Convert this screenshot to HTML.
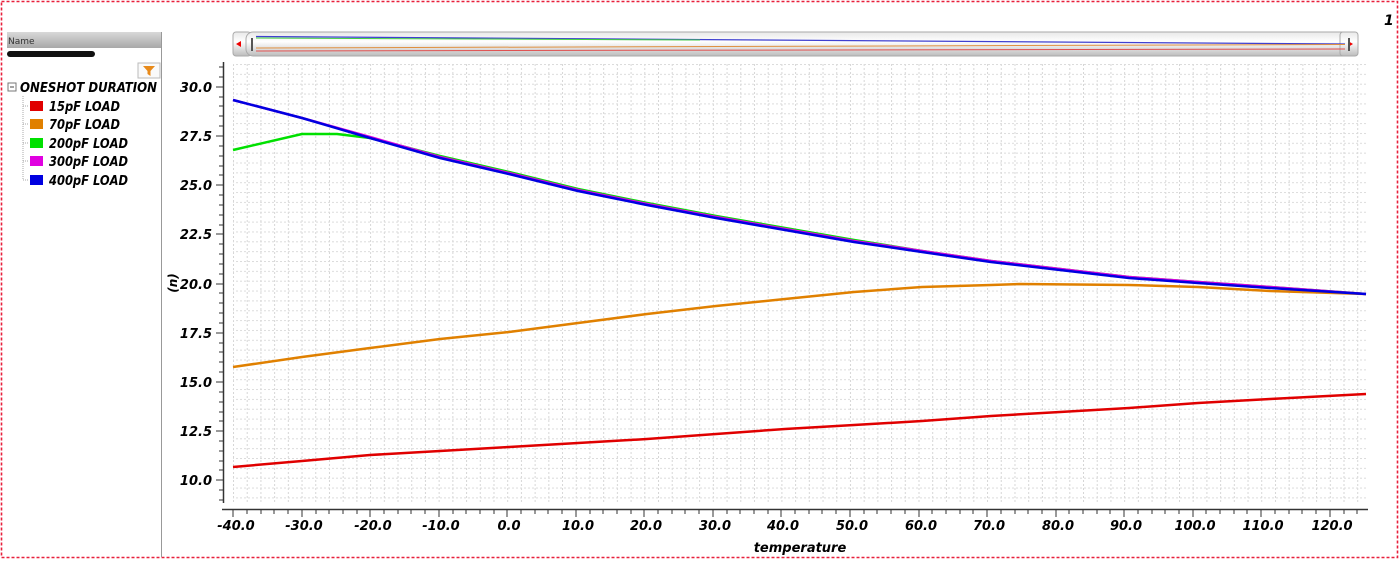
<!DOCTYPE html>
<html><head><meta charset="utf-8"><style>
body{margin:0;width:1400px;height:561px;background:#fff;overflow:hidden;font-family:"DejaVu Sans","Liberation Sans",sans-serif;}
</style></head><body>
<svg width="1400" height="561" xmlns="http://www.w3.org/2000/svg" font-family="DejaVu Sans, Liberation Sans, sans-serif">
<defs>
<pattern id="gv" x="233" y="0" width="13.71" height="4" patternUnits="userSpaceOnUse"><rect x="0" y="0" width="1" height="2" fill="#d6d6d6"/></pattern>
<pattern id="gh" x="0" y="64" width="4" height="9.85" patternUnits="userSpaceOnUse"><rect x="0" y="0" width="2" height="1" fill="#dcdcdc"/></pattern>
<linearGradient id="hd" x1="0" y1="0" x2="0" y2="1"><stop offset="0" stop-color="#d8d8d8"/><stop offset="1" stop-color="#a8a8a8"/></linearGradient>
<linearGradient id="sb" x1="0" y1="0" x2="0" y2="1"><stop offset="0" stop-color="#e8e8e8"/><stop offset="0.4" stop-color="#ffffff"/><stop offset="1" stop-color="#bcbcbc"/></linearGradient>
</defs>
<rect x="1.5" y="1.5" width="1396" height="556" fill="none" stroke="#e8203c" stroke-width="1.6" stroke-dasharray="3,2"/>
<text x="1384" y="25" font-size="14" font-weight="bold" font-style="italic">1</text>
<!-- left panel -->
<rect x="7" y="32" width="154" height="16" fill="url(#hd)"/>
<text x="8" y="44" font-size="9" fill="#333">Name</text>
<line x1="161.5" y1="32" x2="161.5" y2="557" stroke="#999"/>
<rect x="7" y="51" width="88" height="6" rx="3" fill="#111"/>
<rect x="138" y="63" width="22" height="15" fill="#fafafa" stroke="#bbb"/>
<path d="M143 66 H155 L150.5 71 V76 L147.5 74 V71 Z" fill="#e88a1a"/>
<rect x="8" y="83" width="8" height="8" fill="#fff" stroke="#777"/><line x1="10" y1="87" x2="14" y2="87" stroke="#444"/>
<text x="20" y="92" font-size="13" font-weight="bold" font-style="italic" textLength="137" lengthAdjust="spacingAndGlyphs">ONESHOT DURATION</text>
<path d="M23 96 V180 M23 106 H28 M23 124 H28 M23 143 H28 M23 161 H28 M23 180 H28" stroke="#aaa" stroke-dasharray="1,1" fill="none"/>
<g font-size="13" font-weight="bold" font-style="italic">
<rect x="30" y="101" width="13" height="10" fill="#e00000"/><text x="49" y="111" textLength="71" lengthAdjust="spacingAndGlyphs">15pF LOAD</text>
<rect x="30" y="119" width="13" height="10" fill="#e08000"/><text x="49" y="129" textLength="71" lengthAdjust="spacingAndGlyphs">70pF LOAD</text>
<rect x="30" y="138" width="13" height="10" fill="#00e000"/><text x="49" y="148" textLength="79" lengthAdjust="spacingAndGlyphs">200pF LOAD</text>
<rect x="30" y="156" width="13" height="10" fill="#e000e0"/><text x="49" y="166" textLength="79" lengthAdjust="spacingAndGlyphs">300pF LOAD</text>
<rect x="30" y="175" width="13" height="10" fill="#0000e0"/><text x="49" y="185" textLength="79" lengthAdjust="spacingAndGlyphs">400pF LOAD</text>
</g>
<!-- scrollbar -->
<rect x="233" y="32" width="18" height="24" rx="3" fill="url(#sb)" stroke="#aaa"/>
<path d="M236 44 L241 41 V47 Z" fill="#e00"/>
<rect x="246" y="32" width="1110" height="24" rx="7" fill="url(#sb)" stroke="#aaa"/>
<rect x="1340" y="32" width="18" height="24" rx="3" fill="url(#sb)" stroke="#aaa"/>
<path d="M1353 44 L1348 41 V47 Z" fill="#e00"/>
<rect x="251" y="38" width="2" height="13" fill="#555"/><rect x="1348" y="38" width="2" height="13" fill="#555"/>
<line x1="256" y1="36.5" x2="1345" y2="44" stroke="#4040d0" stroke-width="1.2"/>
<line x1="256" y1="38" x2="700" y2="40" stroke="#40d040" stroke-width="1"/>
<line x1="256" y1="48" x2="1345" y2="44.5" stroke="#e09040" stroke-width="1"/>
<line x1="256" y1="51" x2="1345" y2="49" stroke="#e05050" stroke-width="1"/>
<!-- grid -->
<rect x="233" y="64" width="1135" height="440" fill="url(#gv)"/>
<rect x="233" y="64" width="1135" height="440" fill="url(#gh)"/>
<!-- axes -->
<line x1="223.5" y1="62" x2="223.5" y2="503" stroke="#333" stroke-width="1.5"/>
<g stroke="#333">
<path d="M219 67H223M219 77H223M216 87H223M219 97H223M219 106H223M219 116H223M219 126H223M216 136H223M219 146H223M219 156H223M219 166H223M219 175H223M216 185H223M219 195H223M219 205H223M219 215H223M219 225H223M216 234H223M219 244H223M219 254H223M219 264H223M219 274H223M216 284H223M219 293H223M219 303H223M219 313H223M219 323H223M216 333H223M219 343H223M219 352H223M219 362H223M219 372H223M216 382H223M219 392H223M219 402H223M219 412H223M219 421H223M216 431H223M219 441H223M219 451H223M219 461H223M219 470H223M216 480H223M219 490H223M219 500H223"/>
</g>
<line x1="222" y1="509.5" x2="1368" y2="509.5" stroke="#333" stroke-width="1.5"/>
<g font-size="13" font-weight="bold" font-style="italic" text-anchor="end">
<text x="212" y="92">30.0</text><text x="212" y="141">27.5</text><text x="212" y="190">25.0</text><text x="212" y="239">22.5</text><text x="212" y="289">20.0</text><text x="212" y="338">17.5</text><text x="212" y="387">15.0</text><text x="212" y="436">12.5</text><text x="212" y="485">10.0</text>
</g>
<text transform="translate(177,283) rotate(-90)" font-size="12" font-weight="bold" font-style="italic" text-anchor="middle">(n)</text>
<g stroke="#333">
<path d="M233 510v7M302 510v7M370 510v7M439 510v7M507 510v7M576 510v7M644 510v7M713 510v7M781 510v7M850 510v7M919 510v7M987 510v7M1056 510v7M1124 510v7M1193 510v7M1261 510v7M1330 510v7"/>
<path d="M247 510v4M261 510v4M274 510v4M288 510v4M316 510v4M329 510v4M343 510v4M357 510v4M384 510v4M398 510v4M411 510v4M425 510v4M453 510v4M466 510v4M480 510v4M494 510v4M521 510v4M535 510v4M548 510v4M562 510v4M590 510v4M603 510v4M617 510v4M631 510v4M658 510v4M672 510v4M685 510v4M699 510v4M727 510v4M740 510v4M754 510v4M768 510v4M795 510v4M809 510v4M822 510v4M836 510v4M864 510v4M877 510v4M891 510v4M905 510v4M932 510v4M946 510v4M960 510v4M973 510v4M1001 510v4M1015 510v4M1028 510v4M1042 510v4M1069 510v4M1083 510v4M1097 510v4M1110 510v4M1138 510v4M1152 510v4M1165 510v4M1179 510v4M1206 510v4M1220 510v4M1234 510v4M1247 510v4M1275 510v4M1289 510v4M1302 510v4M1316 510v4M1344 510v4M1357 510v4"/>
</g>
<g font-size="13" font-weight="bold" font-style="italic" text-anchor="middle">
<text x="236" y="530">-40.0</text><text x="304" y="530">-30.0</text><text x="373" y="530">-20.0</text><text x="441" y="530">-10.0</text><text x="509" y="530">0.0</text><text x="578" y="530">10.0</text><text x="646" y="530">20.0</text><text x="715" y="530">30.0</text><text x="783" y="530">40.0</text><text x="852" y="530">50.0</text><text x="921" y="530">60.0</text><text x="989" y="530">70.0</text><text x="1058" y="530">80.0</text><text x="1126" y="530">90.0</text><text x="1195" y="530">100.0</text><text x="1263" y="530">110.0</text><text x="1332" y="530">120.0</text>
</g>
<text x="800" y="552" font-size="13" font-weight="bold" font-style="italic" text-anchor="middle">temperature</text>
<!-- curves -->
<g fill="none" stroke-width="2.5" stroke-linejoin="round">
<polyline stroke="#e00000" points="233,467 302,461 370,455 440,451 509,447 578,443 647,439 716,434 785,429 854,425 922,421 991,416 1060,412 1129,408 1198,403 1270,399 1366,394"/>
<polyline stroke="#e08000" points="233,367 302,357 370,348 440,339 509,332 578,323 647,314 716,306 785,299 854,292 922,287 991,285 1020,284 1129,285 1198,287 1270,291 1366,294"/>
<polyline stroke="#00e000" points="233,150 302,134 337,134 370,138 440,156 509,172 578,189 647,203 716,216 785,228 854,240 922,251 991,261 1060,269 1129,277 1198,282 1270,287 1366,294"/>
<polyline stroke="#e000e0" points="233,100 302,118 370,137 440,157 509,173 578,190 647,204 716,217 785,229 854,241 922,251 991,261 1060,269 1129,277 1198,282 1270,287 1366,294"/>
<polyline stroke="#0000e0" points="233,100 302,118 370,138 440,158 509,174 578,191 647,205 716,218 785,230 854,242 922,252 991,262 1060,270 1129,278 1198,283 1270,288 1366,294"/>
</g>
</svg>
</body></html>
